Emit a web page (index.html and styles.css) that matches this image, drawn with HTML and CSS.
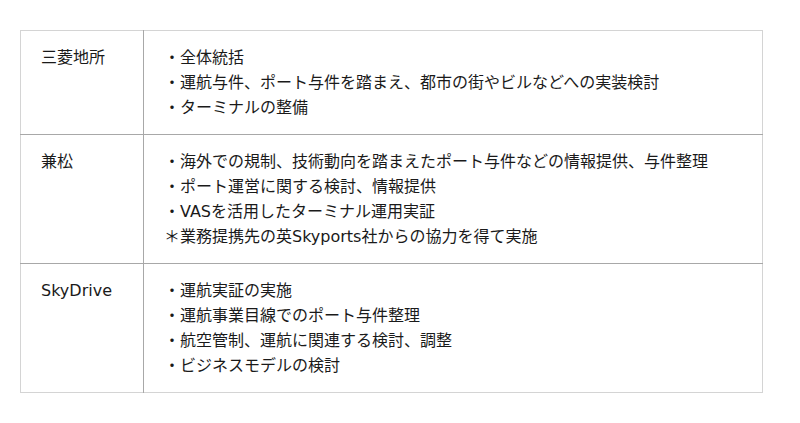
FILE: index.html
```html
<!DOCTYPE html>
<html lang="ja">
<head>
<meta charset="utf-8">
<link rel="stylesheet" href="styles.css">
</head>
<body>
<div class="page">
  <table class="roles">
    <tr>
      <td class="org">三菱地所</td>
      <td class="tasks">
        <div>・全体統括</div>
        <div>・運航与件、ポート与件を踏まえ、都市の街やビルなどへの実装検討</div>
        <div>・ターミナルの整備</div>
      </td>
    </tr>
    <tr>
      <td class="org">兼松</td>
      <td class="tasks">
        <div>・海外での規制、技術動向を踏まえたポート与件などの情報提供、与件整理</div>
        <div>・ポート運営に関する検討、情報提供</div>
        <div>・VASを活用したターミナル運用実証</div>
        <div>＊業務提携先の英Skyports社からの協力を得て実施</div>
      </td>
    </tr>
    <tr>
      <td class="org">SkyDrive</td>
      <td class="tasks">
        <div>・運航実証の実施</div>
        <div>・運航事業目線でのポート与件整理</div>
        <div>・航空管制、運航に関連する検討、調整</div>
        <div>・ビジネスモデルの検討</div>
      </td>
    </tr>
  </table>
</div>
</body>
</html>
```

FILE: styles.css
```css
html, body {
  margin: 0;
  padding: 0;
  background: #ffffff;
}
body {
  font-family: "DejaVu Sans", "Noto Sans CJK JP", sans-serif;
  font-size: 16px;
  color: #1a1a1a;
}
.page {
  padding: 30px 0 0 20px;
}
.roles {
  border-collapse: collapse;
  width: 743px;
  border: 1px solid #d4d4d4;
}
.roles td {
  vertical-align: top;
  padding: 14px 20px 14px 20px;
  line-height: 25px;
  font-size: 16px;
}
.roles tr + tr td {
  border-top: 1px solid #a8a8a8;
}
.org {
  width: 82px;
  border-right: 1px solid #a8a8a8;
}
.tasks {
  padding-left: 19px;
}
.tasks div {
  white-space: nowrap;
}
```
